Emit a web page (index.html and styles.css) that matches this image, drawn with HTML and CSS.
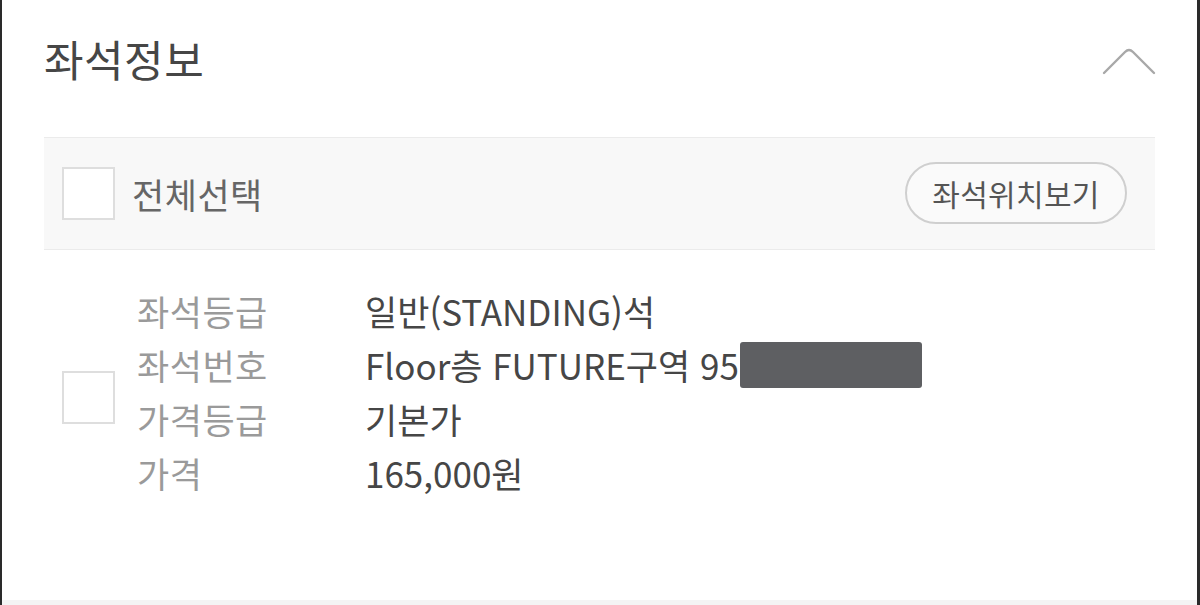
FILE: index.html
```html
<!DOCTYPE html>
<html lang="ko">
<head>
<meta charset="utf-8">
<title>좌석정보</title>
<link rel="stylesheet" href="styles.css">
</head>
<body>
<div class="panel">
  <div class="header">
    <h2 class="title">좌석정보</h2>
    <svg class="chevron" width="54" height="30" viewBox="0 0 54 30" aria-hidden="true">
      <path d="M2 27 L23 6 Q27 2 31 6 L52 27" fill="none" stroke="#a8a8a8" stroke-width="2.4" stroke-linecap="round" stroke-linejoin="round"/>
    </svg>
  </div>
  <div class="band">
    <span class="check"></span>
    <span class="all">전체선택</span>
    <span class="spacer"></span>
    <button class="pill">좌석위치보기</button>
  </div>
  <div class="item">
    <span class="check item-check"></span>
    <div class="rows">
      <div class="row"><span class="label">좌석등급</span><span class="value">일반(STANDING)석</span></div>
      <div class="row"><span class="label">좌석번호</span><span class="value">Floor층 FUTURE구역 95<span class="redact"></span></span></div>
      <div class="row"><span class="label">가격등급</span><span class="value">기본가</span></div>
      <div class="row"><span class="label">가격</span><span class="value">165,000원</span></div>
    </div>
  </div>
  <div class="fill"></div>
  <div class="bottom"></div>
</div>
</body>
</html>
```

FILE: styles.css
```css
* { box-sizing: border-box; }
html, body { margin: 0; padding: 0; background: #fff; }
body {
  font-family: "Noto Sans CJK KR", "Noto Sans", sans-serif;
  width: 1200px;
  height: 605px;
  overflow: hidden;
}
.panel {
  height: 605px;
  border-left: 2px solid #2a2a2a;
  border-right: 3px solid #2a2a2a;
  display: flex;
  flex-direction: column;
  background: #fff;
}
.header {
  height: 116px;
  display: flex;
  align-items: center;
  justify-content: space-between;
  padding: 0 43px 0 42px;
}
.title {
  margin: 0;
  font-size: 43px;
  font-weight: 400;
  color: #464646;
  letter-spacing: 0.5px;
  line-height: 1;
}
.chevron { margin-top: 6px; margin-right: -2px; display: block; }
.band {
  margin: 21px 42px 0 42px;
  height: 113px;
  background: #f8f8f8;
  border-top: 1px solid #ebebeb;
  border-bottom: 1px solid #ebebeb;
  display: flex;
  align-items: center;
  padding: 0 28px 0 18px;
}
.check {
  width: 53px;
  height: 53px;
  background: #fff;
  border: 2px solid #dedede;
  flex: none;
  display: block;
}
.all {
  margin-left: 17px;
  font-size: 35px;
  color: #666;
  letter-spacing: 0.5px;
}
.spacer { flex: 1; }
.pill {
  width: 222px;
  height: 62px;
  border: 2px solid #cfcfcf;
  border-radius: 31px;
  background: #fafafa;
  font-family: inherit;
  font-size: 30px;
  color: #555;
  letter-spacing: 0.3px;
  padding: 0;
  margin-top: -2px;
}
.item {
  display: flex;
  align-items: center;
  padding: 33px 0 0 60px;
}
.item-check { margin-top: 12px; }
.rows {
  margin-left: 22px;
  display: flex;
  flex-direction: column;
}
.row {
  display: flex;
  height: 54px;
  align-items: center;
  font-size: 35px;
}
.label {
  width: 228px;
  color: #9a9a9a;
  letter-spacing: 0.5px;
}
.value {
  color: #464646;
  display: flex;
  align-items: center;
  letter-spacing: 0;
}
.redact {
  display: inline-block;
  width: 182px;
  height: 46px;
  background: #5e5f62;
  border-radius: 3px;
  margin-left: 1px;
  margin-top: 2px;
}
.fill { flex: 1; }
.bottom {
  height: 5px;
  background: #f4f4f4;
}
```
